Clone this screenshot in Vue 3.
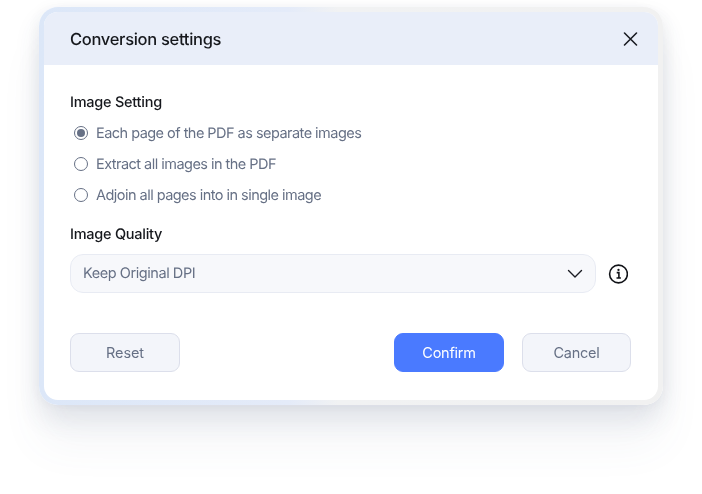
<script setup>
const options = [
  { label: 'Each page of the PDF as separate images', checked: true },
  { label: 'Extract all images in the PDF', checked: false },
  { label: 'Adjoin all pages into in single image', checked: false }
]
</script>

<template>
  <div class="page">
    <div class="frame">
      <div class="dialog">
        <header class="head">
          <h1 class="title">Conversion settings</h1>
          <svg class="close" width="16" height="16" viewBox="0 0 16 16" fill="none">
            <path d="M2.5 2L14.5 14M14.5 2L2.5 14" stroke="#1a1c22" stroke-width="1.6" stroke-linecap="round" />
          </svg>
        </header>
        <div class="body">
          <div class="label first">Image Setting</div>
          <div class="options">
            <div v-for="o in options" :key="o.label" class="option">
              <span class="radio" :class="{ on: o.checked }"></span>
              <span class="option-text">{{ o.label }}</span>
            </div>
          </div>
          <div class="label second">Image Quality</div>
          <div class="row">
            <div class="select">
              <span>Keep Original DPI</span>
              <svg width="16" height="10" viewBox="0 0 16 10" fill="none">
                <path d="M1.5 1.5L8 8L14.5 1.5" stroke="#1a1c22" stroke-width="1.4" stroke-linecap="round" stroke-linejoin="round" />
              </svg>
            </div>
            <svg class="info" width="20" height="20" viewBox="0 0 20 20" fill="none">
              <circle cx="10.5" cy="10" r="8.9" stroke="#111318" stroke-width="1.6" />
              <circle cx="10.5" cy="5.9" r="1.15" fill="#111318" />
              <path d="M8.7 8.6H10.9V13.7M8.5 14H12.9" stroke="#111318" stroke-width="1.6" />
            </svg>
          </div>
          <div class="actions">
            <button class="btn reset">Reset</button>
            <div class="right">
              <button class="btn primary">Confirm</button>
              <button class="btn cancel">Cancel</button>
            </div>
          </div>
        </div>
      </div>
    </div>
  </div>
</template>

<style>
html, body { margin: 0; background: #fff; }
</style>

<style scoped>
.page {
  width: 702px;
  height: 494px;
  box-sizing: border-box;
  padding: 7px 39px 0;
  background: #fff;
  overflow: hidden;
  font-family: Inter, "Liberation Sans", sans-serif;
  text-rendering: geometricPrecision;
}
.frame {
  width: 624px;
  height: 398px;
  box-sizing: border-box;
  padding: 5px;
  border-radius: 19px;
  background: linear-gradient(90deg, #dce7f8 0%, #e4ebf9 40%, #f1f2f3 48%, #f1f1f1 100%);
  box-shadow: 0 14px 26px rgba(60, 75, 110, 0.12), 0 40px 44px rgba(80, 95, 130, 0.06), -4px 0 14px rgba(80, 95, 130, 0.04), 6px 2px 16px rgba(80, 95, 130, 0.03);
  filter: blur(0.25px);
}
.dialog {
  height: 100%;
  background: #fff;
  border-radius: 14px;
  overflow: hidden;
}
.head {
  height: 53px;
  background: #e9eef9;
  display: flex;
  align-items: center;
  justify-content: space-between;
  padding: 0 20px 0 26px;
}
.title {
  margin: 0;
  font-size: 16.5px;
  font-weight: 500;
  letter-spacing: -0.3px;
  color: #16181d;
}
.close { display: block; }
.body { padding: 0 27px 0 26px; }
.label {
  font-size: 14.5px;
  line-height: 20px;
  font-weight: 500;
  letter-spacing: -0.25px;
  color: #16181d;
}
.first { margin-top: 28px; }
.second { margin-top: 15px; }
.options { margin-top: 4px; }
.option {
  height: 31px;
  display: flex;
  align-items: center;
  gap: 8px;
  padding-left: 4px;
  font-size: 14.5px;
  letter-spacing: -0.53px;
  color: #667085;
}
.option-text { padding-top: 1px; }
.radio {
  width: 14px;
  height: 14px;
  box-sizing: border-box;
  border: 1.5px solid #667085;
  border-radius: 50%;
  display: flex;
  align-items: center;
  justify-content: center;
}
.radio.on::after {
  content: "";
  width: 8px;
  height: 8px;
  border-radius: 50%;
  background: #667085;
}
.row {
  display: flex;
  align-items: center;
  margin-top: 9px;
}
.select {
  width: 526px;
  height: 39px;
  box-sizing: border-box;
  padding: 0 12px;
  display: flex;
  align-items: center;
  justify-content: space-between;
  background: #f7f8fb;
  border: 1px solid #e8ebf3;
  border-radius: 13px;
  font-size: 14.5px;
  letter-spacing: -0.44px;
  color: #667085;
}
.info { margin-left: 12px; display: block; }
.actions {
  margin-top: 40px;
  display: flex;
  justify-content: space-between;
}
.right { display: flex; gap: 18px; }
.btn {
  width: 110px;
  height: 39px;
  box-sizing: border-box;
  padding: 0;
  background: #f3f5fa;
  border: 1px solid #dcdfeb;
  border-radius: 9px;
  font: 400 14.5px Inter, "Liberation Sans", sans-serif;
  letter-spacing: -0.25px;
  color: #667085;
}
.btn.reset { letter-spacing: -0.1px; }
.btn.cancel { width: 109px; }
.btn.primary {
  background: #4a7aff;
  border-color: #4a7aff;
  color: #fff;
}
</style>
